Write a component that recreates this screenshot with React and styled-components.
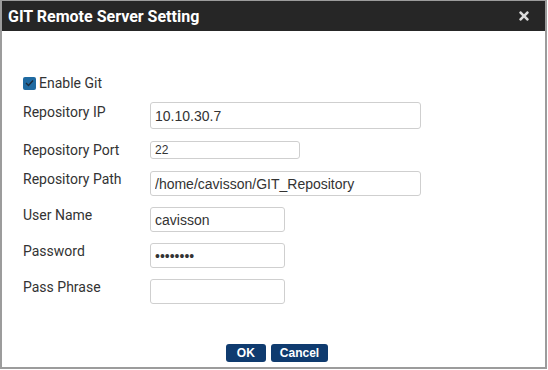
import React from "react";
import styled, { createGlobalStyle } from "styled-components";
import { FaTimes } from "react-icons/fa";

const GlobalStyle = createGlobalStyle`
  html, body {
    margin: 0;
    padding: 0;
    background: #fff;
  }
`;

const Dialog = styled.div`
  box-sizing: border-box;
  width: 547px;
  height: 369px;
  border: 2px solid #9c9c9c;
  border-top-width: 1px;
  background: #fff;
  display: flex;
  flex-direction: column;
  font-family: Roboto, "Liberation Sans", sans-serif;
`;

const Header = styled.div`
  height: 30px;
  background: #262626;
  display: flex;
  align-items: center;
  justify-content: space-between;
  padding: 0 14px 0 6px;
  color: #fff;
  font-size: 16px;
  font-weight: 700;
`;

const Close = styled.span`
  display: flex;
  color: #dcdcdc;
  cursor: pointer;
`;

const Body = styled.div`
  flex: 1;
  display: flex;
  flex-direction: column;
  padding: 44px 0 0 21px;
`;

const CheckRow = styled.label`
  display: flex;
  align-items: center;
  gap: 3px;
  font-size: 14px;
  line-height: 16px;
  color: #333;
`;

const Box = styled.span`
  width: 13px;
  height: 13px;
  border-radius: 2px;
  background: #1f6aa1;
  display: flex;
  align-items: center;
  justify-content: center;
`;

const Form = styled.div`
  display: grid;
  grid-template-columns: 127px auto;
  row-gap: 11px;
  margin-top: 11px;
  align-items: start;
`;

const Label = styled.div`
  font-size: 14px;
  line-height: 16px;
  color: #333;
  padding-top: ${(p) => p.$pt ?? 0}px;
`;

const Input = styled.input`
  box-sizing: border-box;
  width: ${(p) => p.$w}px;
  height: ${(p) => p.$h || 25}px;
  border: 1px solid #cfcfcf;
  border-radius: 3px;
  padding: 0 4px;
  margin: 0 0 ${(p) => p.$mb || 0}px;
  font-family: "Liberation Sans", Arial, sans-serif;
  font-size: ${(p) => p.$fs || 14}px;
  color: #333;
  outline: none;
`;

const Footer = styled.div`
  display: flex;
  justify-content: center;
  gap: 5px;
  margin-top: 40px;
  padding-right: 14px;
`;

const Button = styled.button`
  height: 18px;
  padding: 0 ${(p) => p.$px || 10}px;
  background: #0f3b6f;
  color: #fff;
  border: none;
  border-radius: 3px;
  font-family: "Liberation Sans", Arial, sans-serif;
  font-size: 12px;
  font-weight: 700;
  cursor: pointer;
`;

const rows = [
  { label: "Repository IP", value: "10.10.30.7", w: 271, h: 27, mb: 1, pt: 2 },
  { label: "Repository Port", value: "22", w: 150, h: 18, fs: 12, pt: 1, mb: 1 },
  { label: "Repository Path", value: "/home/cavisson/GIT_Repository", w: 271 },
  { label: "User Name", value: "cavisson", w: 135 },
  { label: "Password", value: "cavisson", w: 135, type: "password" },
  { label: "Pass Phrase", value: "", w: 135 },
];

export default function App() {
  return (
    <>
      <GlobalStyle />
      <Dialog>
        <Header>
          <span>GIT Remote Server Setting</span>
          <Close>
            <FaTimes size={14} />
          </Close>
        </Header>
        <Body>
          <CheckRow>
            <Box>
              <svg width="9" height="8" viewBox="0 0 9 8">
                <path d="M1 4 L3.5 6.5 L8 1.5" fill="none" stroke="#1b2a3a" strokeWidth="1.4" />
              </svg>
            </Box>
            Enable Git
          </CheckRow>
          <Form>
            {rows.map((r) => (
              <React.Fragment key={r.label}>
                <Label $pt={r.pt}>{r.label}</Label>
                <Input
                  type={r.type || "text"}
                  defaultValue={r.value}
                  $w={r.w}
                  $h={r.h}
                  $fs={r.fs}
                  $mb={r.mb}
                />
              </React.Fragment>
            ))}
          </Form>
          <Footer>
            <Button $px={11}>OK</Button>
            <Button $px={9}>Cancel</Button>
          </Footer>
        </Body>
      </Dialog>
    </>
  );
}
